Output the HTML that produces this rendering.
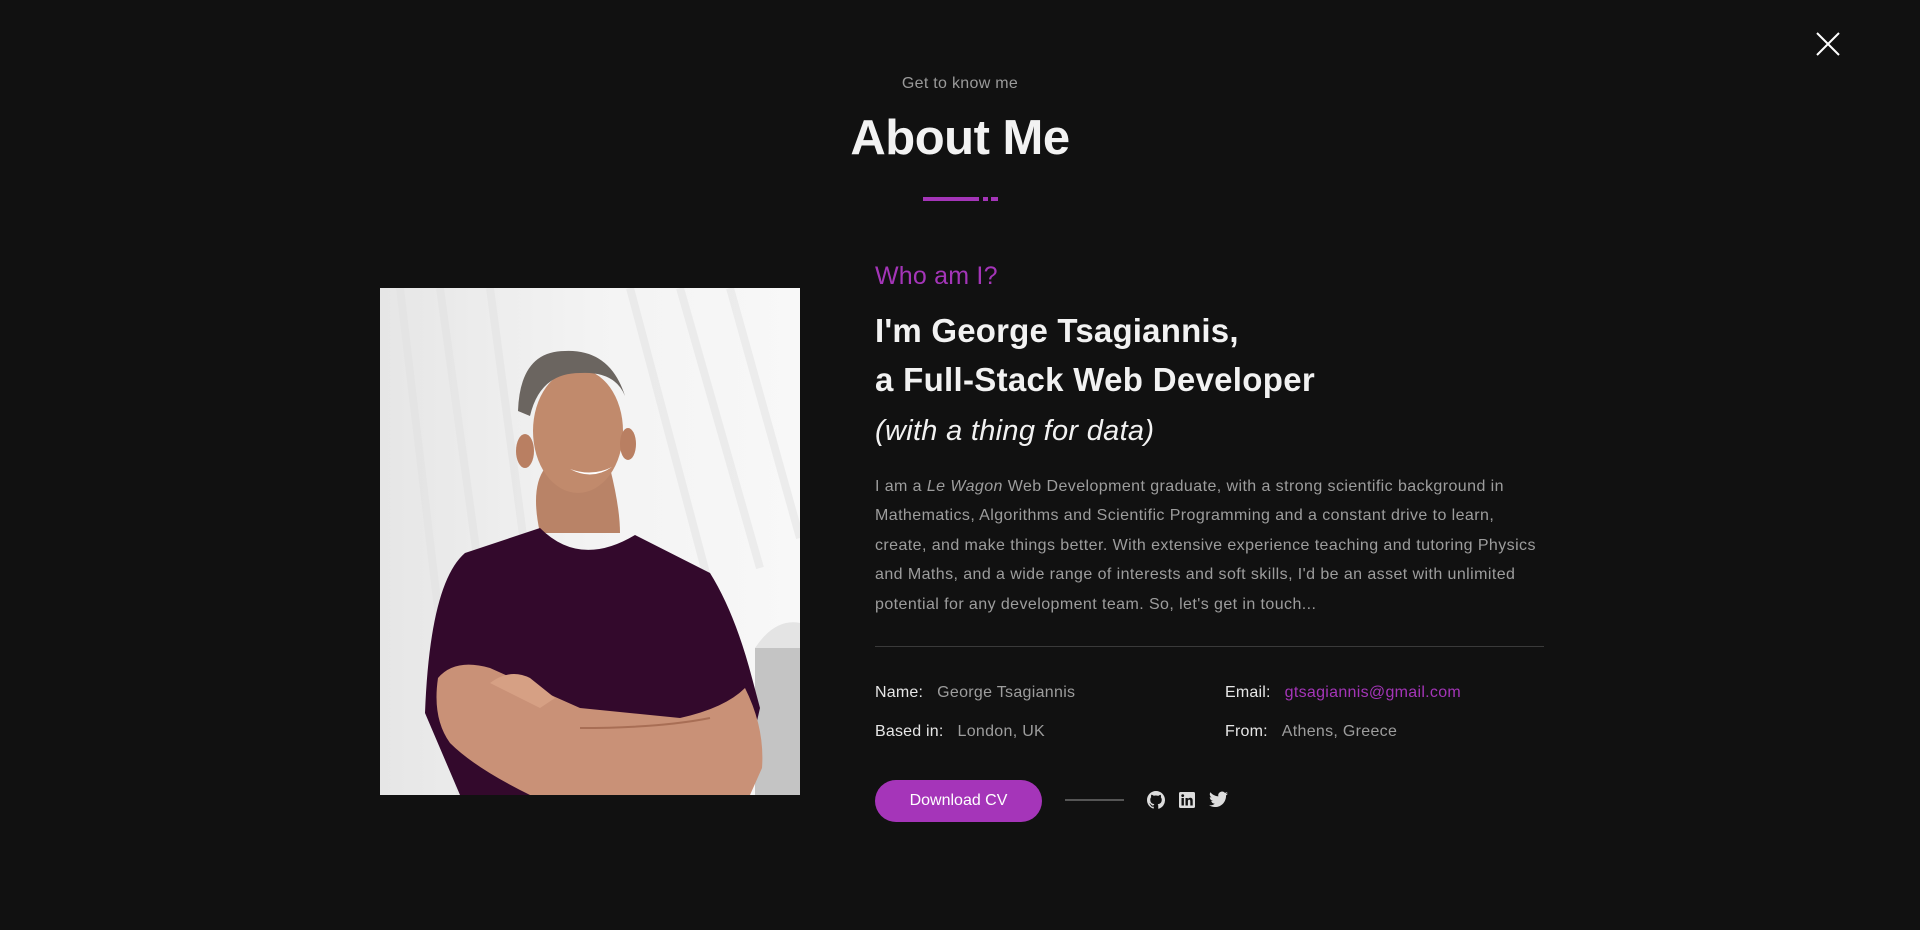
<!DOCTYPE html>
<html><head><meta charset="utf-8"><style>
*{margin:0;padding:0;box-sizing:border-box}
body{width:1920px;height:930px;background:#111111;font-family:"Liberation Sans",sans-serif;position:relative;overflow:hidden;color:#eee}
.a{position:absolute;white-space:nowrap}
.p{color:#9d9d9d;font-size:16px;letter-spacing:.42px;line-height:29.4px}
.lab{color:#e6e6e6;font-size:16px;letter-spacing:.2px}
.val{color:#9d9d9d;font-size:16px;letter-spacing:.3px}
</style></head><body>
<svg class="a" style="left:1816px;top:32px" width="24" height="24" viewBox="0 0 24 24"><path d="M1 1L23 23M23 1L1 23" stroke="#fff" stroke-width="2"/></svg>
<div class="a" style="left:0;width:1920px;top:75px;text-align:center;color:#9a9a9a;font-size:16px;letter-spacing:.3px">Get to know me</div>
<div class="a" style="left:0;width:1920px;top:110px;text-align:center;color:#f2f2f2;font-size:49px;font-weight:bold;letter-spacing:-.5px">About Me</div>
<div class="a" style="left:923px;top:197px;width:56px;height:4px;background:#a435b8"></div>
<div class="a" style="left:983px;top:197px;width:5px;height:4px;background:#a435b8"></div>
<div class="a" style="left:991px;top:197px;width:7px;height:4px;background:#a435b8"></div>

<svg class="a" style="left:380px;top:288px" width="420" height="507" viewBox="0 0 420 507">
<defs><linearGradient id="bg" x1="0" y1="0" x2="1" y2="0"><stop offset="0" stop-color="#e6e6e6"/><stop offset=".5" stop-color="#f3f3f3"/><stop offset="1" stop-color="#f8f8f8"/></linearGradient></defs>
<rect width="420" height="507" fill="url(#bg)"/>
<g stroke="#e2e2e2" stroke-width="8" opacity=".5"><path d="M20 0L80 507M60 0L130 507M110 0L150 300M250 0L330 300M300 0L380 280M350 0L420 250"/></g>
<rect x="375" y="360" width="45" height="147" fill="#c4c4c4"/>
<path d="M375 360Q395 330 420 335L420 360Z" fill="#e4e4e4"/>
<path d="M160 245Q150 200 165 180L230 180Q240 220 240 245Z" fill="#b98367"/>
<ellipse cx="198" cy="143" rx="45" ry="62" fill="#c18a6c"/>
<path d="M138 123Q140 63 185 63Q230 61 245 108Q235 83 200 85Q160 85 150 128Z" fill="#6b6560"/>
<ellipse cx="145" cy="163" rx="9" ry="17" fill="#b97f62"/>
<ellipse cx="248" cy="156" rx="8" ry="16" fill="#b97f62"/>
<path d="M190 181Q212 189 232 179Q212 193 190 181Z" fill="#fff"/>
<path d="M160 240Q200 280 255 247L330 285Q355 325 372 390L380 420L360 507L80 507L45 425Q50 295 85 265Z" fill="#33092c"/>
<path d="M58 390Q75 370 110 380L200 420L300 430Q345 420 365 400Q385 440 382 480L370 507L150 507Q95 480 70 455Q52 430 58 390Z" fill="#c99177"/>
<path d="M110 395Q130 380 150 390L175 410L160 420Z" fill="#d6a084"/>
<path d="M200 440Q280 440 330 430" stroke="#a86e55" stroke-width="2" fill="none"/>
</svg>

<div class="a" style="left:875px;top:262px;color:#a435b8;font-size:25px;letter-spacing:.2px">Who am I?</div>
<div class="a" style="left:875px;top:312px;color:#f2f2f2;font-size:33px;font-weight:bold;letter-spacing:.2px">I'm George Tsagiannis,</div>
<div class="a" style="left:875px;top:361px;color:#f2f2f2;font-size:33px;font-weight:bold;letter-spacing:.3px">a Full-Stack Web Developer</div>
<div class="a" style="left:875px;top:415px;color:#f2f2f2;font-size:29px;font-style:italic;letter-spacing:.3px">(with a thing for data)</div>
<div class="a p" style="left:875px;top:472px">I am a <i>Le Wagon</i> Web Development graduate, with a strong scientific background in<br>Mathematics, Algorithms and Scientific Programming and a constant drive to learn,<br>create, and make things better. With extensive experience teaching and tutoring Physics<br>and Maths, and a wide range of interests and soft skills, I'd be an asset with unlimited<br>potential for any development team. So, let's get in touch...</div>
<div class="a" style="left:875px;top:646px;width:669px;height:1px;background:#3a3a3a"></div>

<div class="a" style="left:875px;top:684px"><span class="lab">Name:</span><span class="val" style="margin-left:14px">George Tsagiannis</span></div>
<div class="a" style="left:875px;top:723px"><span class="lab">Based in:</span><span class="val" style="margin-left:14px">London, UK</span></div>
<div class="a" style="left:1225px;top:684px"><span class="lab">Email:</span><span class="val" style="margin-left:14px;color:#a435b8">gtsagiannis@gmail.com</span></div>
<div class="a" style="left:1225px;top:723px"><span class="lab">From:</span><span class="val" style="margin-left:14px">Athens, Greece</span></div>

<div class="a" style="left:875px;top:780px;width:167px;height:42px;border-radius:21px;background:#a535b9;color:#fff;font-size:16px;text-align:center;line-height:42px">Download CV</div>
<div class="a" style="left:1065px;top:799px;width:59px;height:2px;background:#555"></div>
<svg class="a" style="left:1147px;top:791px" width="18" height="18" viewBox="0 0 16 16"><path fill="#ddd" d="M8 0C3.58 0 0 3.58 0 8c0 3.54 2.29 6.530 5.47 7.59.4.07.55-.17.55-.38v-1.33c-2.230.48-2.7-1.07-2.7-1.07-.36-.92-.89-1.17-.89-1.17-.73-.5.06-.49.06-.49.8.06 1.23.83 1.23.83.71 1.23 1.87.87 2.33.66.07-.52.28-.87.51-1.07-1.78-.2-3.64-.89-3.64-3.95 0-.87.31-1.59.82-2.15-.08-.2-.36-1.02.08-2.12 0 0 .67-.21 2.2.82A7.6 7.6 0 0 1 8 4.04c.68 0 1.36.09 2 .27 1.53-1.04 2.2-.82 2.2-.82.44 1.1.16 1.92.08 2.12.51.56.82 1.27.82 2.15 0 3.07-1.87 3.75-3.65 3.95.29.25.54.73.54 1.48v2.2c0 .21.15.46.55.38A8 8 0 0 0 16 8c0-4.42-3.58-8-8-8z"/></svg>
<svg class="a" style="left:1179px;top:792px" width="16" height="16" viewBox="0 0 16 16"><rect width="16" height="16" rx="1.5" fill="#ddd"/><rect x="2.5" y="6" width="2.4" height="7.5" fill="#111"/><circle cx="3.7" cy="3.6" r="1.4" fill="#111"/><path d="M6.5 6h2.3v1.1C9.3 6.3 10.2 5.8 11.3 5.8c1.8 0 2.4 1.1 2.4 3v4.7h-2.4V9.2c0-.9-.2-1.6-1.1-1.6s-1.3.7-1.3 1.6v4.3H6.5z" fill="#111"/></svg>
<svg class="a" style="left:1209px;top:791px" width="19" height="17" viewBox="0 0 24 20"><path fill="#ddd" d="M24 2.4a9.8 9.8 0 0 1-2.8.8A4.9 4.9 0 0 0 23.3.4a9.9 9.9 0 0 1-3.1 1.2A4.9 4.9 0 0 0 11.8 6 14 14 0 0 1 1.7.9a4.9 4.9 0 0 0 1.5 6.6A4.9 4.9 0 0 1 1 6.9v.1a4.9 4.9 0 0 0 3.9 4.8 4.9 4.9 0 0 1-2.2.1 4.9 4.9 0 0 0 4.6 3.4A9.9 9.9 0 0 1 0 17.3 14 14 0 0 0 7.5 19.5c9.1 0 14-7.5 14-14v-.6A10 10 0 0 0 24 2.4z"/></svg>
</body></html>
